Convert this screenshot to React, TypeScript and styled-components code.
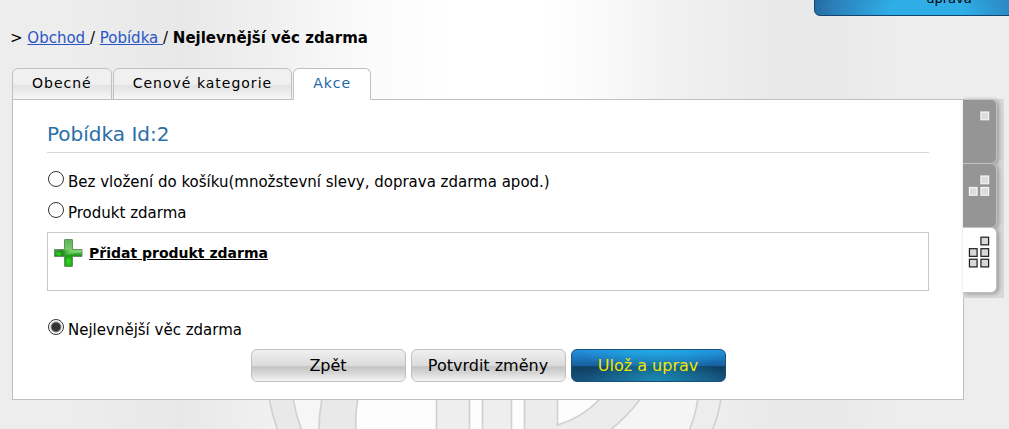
import React from "react";
import styled, { createGlobalStyle, css } from "styled-components";

const GlobalStyle = createGlobalStyle`
  * { box-sizing: border-box; }
  body {
    margin: 0;
    background: #ededed;
    font-family: Verdana, "DejaVu Sans", sans-serif;
    font-size: 15px;
    line-height: 20px;
    color: #000;
  }
`;

const Page = styled.div`
  position: relative;
  min-height: 100vh;
  overflow: hidden;
  background: linear-gradient(90deg, #ededed 0, #ededed 70px, #e8e8e8 180px, #f0f0f0 270px, #fafafa 360px, #fff 450px, #fff 540px, #fafafa 600px, #f1f1f1 670px, #e9e9e9 780px, #e9e9e9 830px, #ededed 900px);
`;

const Watermark = styled.svg`
  position: absolute;
  left: 260px;
  top: 399px;
  width: 480px;
  height: 30px;
`;

const TopButton = styled.button`
  position: absolute;
  top: -24px;
  right: -75px;
  width: 270px;
  height: 40px;
  padding: 5px 0 0;
  border: 1px solid #15446f;
  border-radius: 6px;
  background: radial-gradient(ellipse 125px 60px at 112px 34px, #2fade6 30%, #2b80b8 75%, #1e5f92 100%);
  font: inherit;
  font-size: 13px;
  line-height: 20px;
  color: #000;
`;

const Crumbs = styled.nav`
  padding: 28px 10px 0;
  white-space: pre;

  a { color: #2a56c6; }
`;

const Tabs = styled.div`
  position: relative;
  z-index: 1;
  display: flex;
  gap: 1px;
  margin: 20px 0 -1px 12px;
`;

const Tab = styled.button<{ $active?: boolean }>`
  height: 32px;
  padding: 0 19px 2px;
  border: 1px solid #c0c0c0;
  border-radius: 6px 6px 0 0;
  background: linear-gradient(#f0f0f0, #f0f0f0 50%, #e3e3e3 56%, #f6f6f6);
  font: inherit;
  font-size: 14px;
  letter-spacing: 1px;
  color: #000;
  ${(p) => p.$active && css`
    border-bottom-color: #fff;
    background: #fff;
    color: #1f67a6;
  `}
`;

const Body = styled.div`
  position: relative;
  display: flex;
  align-items: flex-start;
  padding: 0 5px 0 12px;
`;

const Panel = styled.main`
  flex: 1;
  padding: 24px 34px 17px;
  border: 1px solid #c0c0c0;
  background: #fff;
`;

const Title = styled.h1`
  margin: 0 0 18px;
  padding-bottom: 8px;
  border-bottom: 1px solid #d8d8d8;
  font-size: 20px;
  line-height: 20px;
  font-weight: 400;
  color: #2a6fa8;
`;

const Choices = styled.div`
  display: grid;
  gap: 11px;
  padding-bottom: 10px;
`;

const Choice = styled.label`
  display: flex;
  gap: 4px;
  height: 20px;
  line-height: 22px;
`;

const Radio = styled.input`
  appearance: none;
  width: 16px;
  height: 16px;
  margin: 0 0 0 1px;
  border: 1px solid #333;
  border-radius: 50%;
  background: #fff;
  &:checked { background: radial-gradient(circle, #333 4px, #fff 6px) border-box; }
`;

const ProductBox = styled.section`
  min-height: 59px;
  margin-bottom: 28px;
  padding: 5px;
  border: 1px solid #c8c8c8;
`;

const AddLink = styled.a`
  display: flex;
  align-items: center;
  gap: 6px;
  width: fit-content;
  font-size: 14px;
  font-weight: 700;
  color: #000;
`;

const Actions = styled.div`
  display: flex;
  justify-content: center;
  gap: 5px;
`;

const ActionButton = styled.button<{ $primary?: boolean }>`
  width: 155px;
  height: 33px;
  padding: 1px 0 0;
  border: 1px solid #bfc1c1;
  border-radius: 6px;
  background: linear-gradient(#f1f0f0, #dcdbdb 50%, #c4c4c4 54%, #d8d8d8 76%, #f6f6f6);
  font: inherit;
  font-size: 16px;
  color: #000;
  ${(p) => p.$primary && css`
    border-color: #1a5078;
    background:
      radial-gradient(ellipse 70px 28px at 55% 100%, #1a8ab5, #1a8ab500),
      radial-gradient(ellipse 80px 18px at 55% 0, #20aae4, #20aae400),
      linear-gradient(#2390dc, #17609f 50%, #0f3f62 54%, #17557f);
    color: #f0e600;
  `}
`;

const Rail = styled.aside`
  width: 41px;
  margin-left: -1px;
  padding: 0 7px 5px 0;
  background: #d9d9d9;
`;

const RailTab = styled.button<{ $active?: boolean }>`
  display: flex;
  width: 100%;
  height: 65px;
  padding: 7px 5px 0;
  border: 1px solid #c2c2c2;
  border-left: 0;
  border-radius: 0 6px 6px 0;
  background: ${(p) => (p.$active ? "#fff" : "#959595")};
  box-shadow: 2px 1px 4px #999;

  & + & { margin-top: -1px; }
  &:last-child {
    height: 66px;
    padding-top: 8px;
  }
`;

type RailItem = { label: string; cells: number[][]; active?: boolean };

const railItems: RailItem[] = [
  { label: "1", cells: [[12, 4]] },
  { label: "2", cells: [[12, 4], [0, 16], [12, 16]] },
  { label: "3", cells: [[12, 0], [0, 12], [12, 12], [0, 23], [12, 23]], active: true },
];

function Blocks({ cells, active }: { cells: number[][]; active?: boolean }) {
  return (
    <svg width="24" height="34" viewBox="0 0 24 34" aria-hidden="true">
      {cells.map(([x, y]) => (
        <rect key={`${x}-${y}`} x={x + 1.5} y={y + 0.5} width="8" height="8"
          fill={active ? "#d8d8d8" : "#dcdcdc"} stroke={active ? "#222" : "#f4f4f4"} strokeWidth="1.3" />
      ))}
    </svg>
  );
}

function PlusIcon() {
  return (
    <svg width="30" height="30" viewBox="0 0 30 30" aria-hidden="true">
      <defs>
        <linearGradient id="leaf" x1="0" y1="0" x2="0" y2="1">
          <stop offset="0" stopColor="#63b258" />
          <stop offset=".4" stopColor="#74d065" />
          <stop offset=".6" stopColor="#1c9a19" />
          <stop offset="1" stopColor="#22b516" />
        </linearGradient>
        <linearGradient id="shine" x1="0" y1="0" x2="1" y2="0">
          <stop offset="0" stopColor="#128a14" stopOpacity=".5" />
          <stop offset=".25" stopColor="#0c7510" stopOpacity=".8" />
          <stop offset=".6" stopColor="#7fdc70" stopOpacity=".6" />
          <stop offset="1" stopColor="#8fd683" stopOpacity=".7" />
        </linearGradient>
        <radialGradient id="glow">
          <stop offset="0" stopColor="#30e41e" />
          <stop offset="1" stopColor="#30e41e" stopOpacity="0" />
        </radialGradient>
      </defs>
      <path d="M11.500 2Q11.500 1.500 12 1.500H19Q19.500 1.500 19.500 2V11.500H29V18.500H19.500V28Q19.500 28.500 19 28.500H12Q11.500 28.500 11.500 28V18.500H1.500V11.500H11.500Z" fill="url(#leaf)" stroke="#668f68" />
      <path d="M2 12H28.500V15Q20 14 11.500 18H2Z" fill="url(#shine)" />
      <ellipse cx="15.500" cy="23" rx="3.500" ry="5" fill="url(#glow)" />
      <ellipse cx="6" cy="16" rx="4" ry="2.500" fill="url(#glow)" />
    </svg>
  );
}

export default function App() {
  return (
    <Page>
      <GlobalStyle />
      <Watermark viewBox="260 399 480 30" aria-hidden="true">
        <path d="M293 399Q296 416 302 430H319Q319 414 322 399Z" fill="#f6f6f6" />
        <path d="M357 399Q355 414 356 430H690Q696 414 698 399Z" fill="#fdfdfd" />
        <path d="M641 399Q628 416 610 430H690Q696 414 698 399Z" fill="#f5f5f5" />
        <g fill="#e9e9e9" stroke="#d0d0d0" strokeWidth="1.6">
          <path d="M269 398Q272 415 278 431H302Q296 416 293 398Z" />
          <path d="M322 398Q319 414 319 431H356Q355 414 358 398Z" />
          <path d="M436.500 398H469.500V431H436.500Z" fill="#eee" />
          <path d="M482.500 398H511.500V431H482.500Z" fill="#eee" />
          <path d="M524.500 431V398H557.500V425Q582 418 601 398H641Q628 416 609 431Z" fill="#ececec" />
          <path d="M698 398Q696 414 689 431H712Q719 414 721 398Z" fill="#ededed" />
        </g>
      </Watermark>
      <TopButton>uprava</TopButton>
      <Crumbs>&gt; <a href="#obchod">Obchod </a>/ <a href="#pobidka">Pobídka </a>/ <b>Nejlevnější věc zdarma</b></Crumbs>
      <Tabs>
        <Tab>Obecné</Tab>
        <Tab>Cenové kategorie</Tab>
        <Tab $active>Akce</Tab>
      </Tabs>
      <Body>
        <Panel>
          <Title>Pobídka Id:2</Title>
          <Choices>
            <Choice><Radio type="radio" name="akce" />Bez vložení do košíku(množstevní slevy, doprava zdarma apod.)</Choice>
            <Choice><Radio type="radio" name="akce" />Produkt zdarma</Choice>
          </Choices>
          <ProductBox>
            <AddLink href="#pridat"><PlusIcon />Přidat produkt zdarma</AddLink>
          </ProductBox>
          <Choices>
            <Choice><Radio type="radio" name="akce" defaultChecked />Nejlevnější věc zdarma</Choice>
          </Choices>
          <Actions>
            <ActionButton>Zpět</ActionButton>
            <ActionButton>Potvrdit změny</ActionButton>
            <ActionButton $primary>Ulož a uprav</ActionButton>
          </Actions>
        </Panel>
        <Rail>
          {railItems.map((item) => (
            <RailTab key={item.label} $active={item.active} aria-label={item.label}>
              <Blocks cells={item.cells} active={item.active} />
            </RailTab>
          ))}
        </Rail>
      </Body>
    </Page>
  );
}
